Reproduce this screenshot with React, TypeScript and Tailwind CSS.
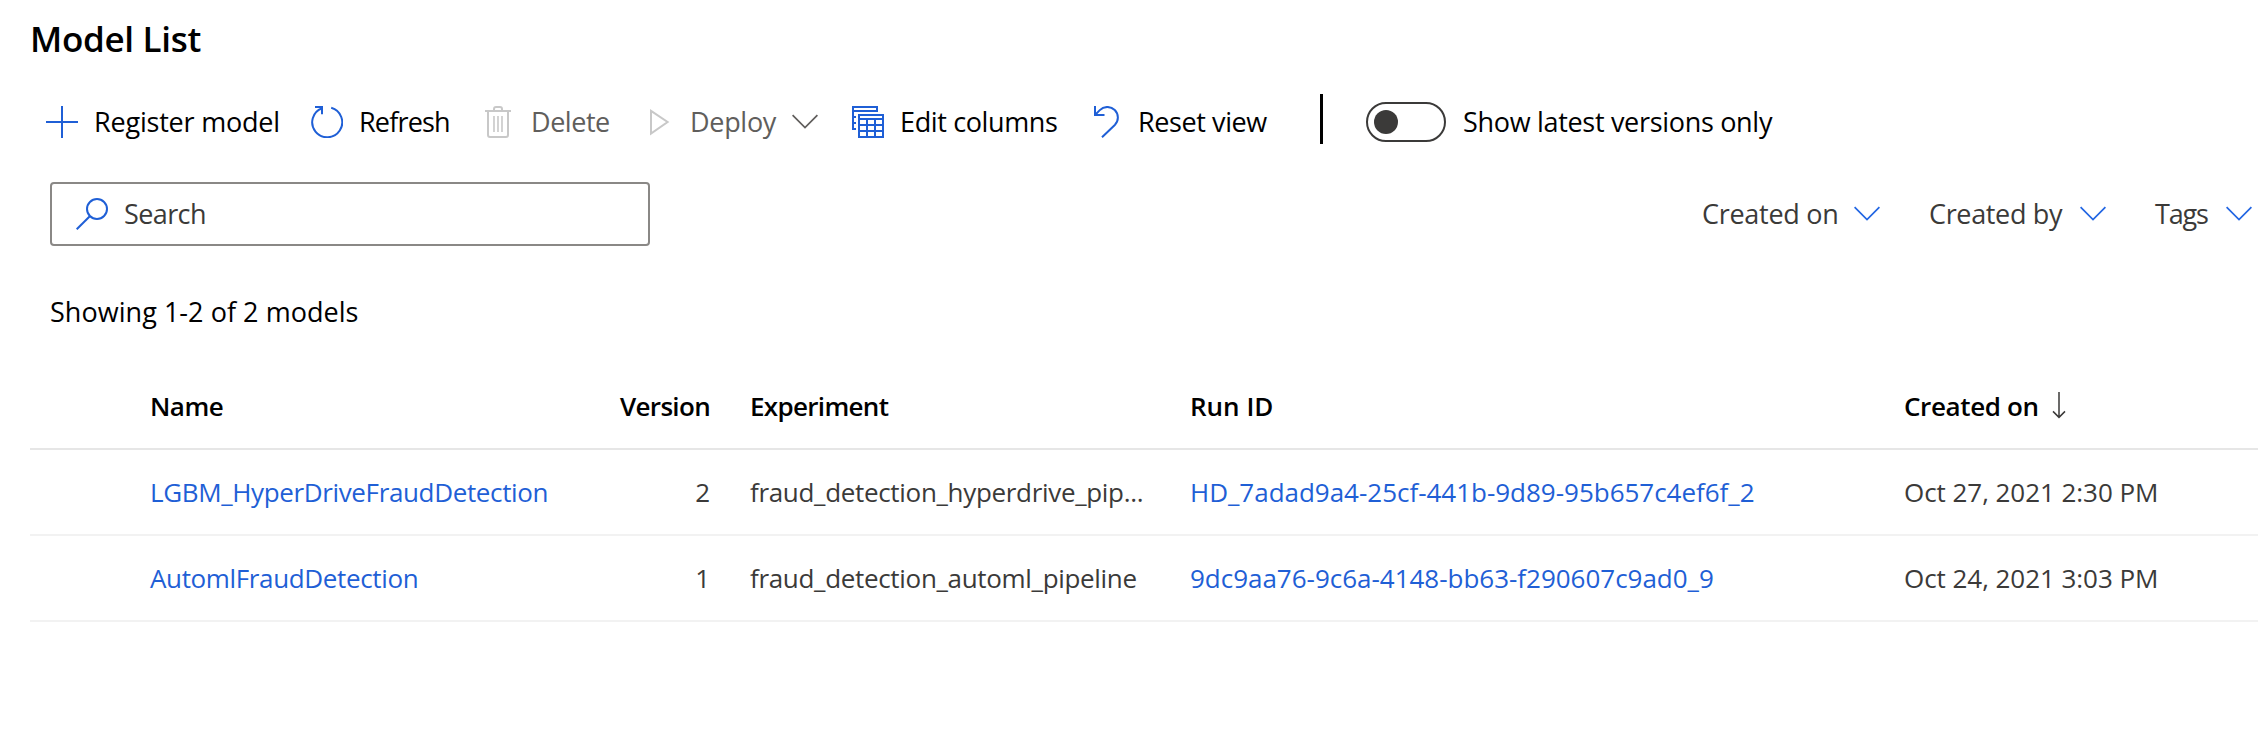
import type { ReactNode } from "react";

const BLUE = "#1f5fd6";

function PlusIcon() {
  return (
    <svg width="32" height="32" viewBox="0 0 32 32" fill="none" stroke={BLUE} strokeWidth="2">
      <path d="M16 0v32M0 16h32" />
    </svg>
  );
}

function RefreshIcon() {
  return (
    <svg width="32" height="32" viewBox="0 0 32 32" fill="none" stroke={BLUE} strokeWidth="2">
      <path d="M20.2 1.8A15 15 0 1 1 11 2.2" />
      <path d="M4 1h7v7.2" />
    </svg>
  );
}

function TrashIcon() {
  return (
    <svg width="32" height="32" viewBox="0 0 32 32" fill="none" stroke="#c8c8c8" strokeWidth="2">
      <path d="M3 5h26" />
      <path d="M12 5V3a2 2 0 0 1 2-2h4a2 2 0 0 1 2 2v2" />
      <path d="M6 5v24a2 2 0 0 0 2 2h16a2 2 0 0 0 2-2V5" />
      <path d="M12 10v16M16 10v16M20 10v16" strokeWidth="1.6" />
    </svg>
  );
}

function PlayIcon() {
  return (
    <svg width="32" height="32" viewBox="0 0 32 32" fill="none" stroke="#c8c8c8" strokeWidth="2">
      <path d="M9 4.8 25.6 16 9 27.6z" />
    </svg>
  );
}

function ColumnsIcon() {
  return (
    <svg width="32" height="32" viewBox="0 0 32 32" fill="none" stroke={BLUE} strokeWidth="2">
      <path d="M4 23H1V1h24v4H1M1 11h3M1 17h3" />
      <path d="M7 9h24v22H7zM7 13h24M7 19h24M7 25h24M15 13v18M23 13v18" />
    </svg>
  );
}

function UndoIcon() {
  return (
    <svg width="32" height="32" viewBox="0 0 32 32" fill="none" stroke={BLUE} strokeWidth="2">
      <path d="M5 0v9h9.5" />
      <path d="M5 9 9.8 4.1A10.5 10.5 0 0 1 24.8 19L12 31.3" />
    </svg>
  );
}

function Chevron({ color }: { color: string }) {
  return (
    <svg width="26" height="16" viewBox="0 0 26 16" fill="none" stroke={color} strokeWidth="1.7">
      <path d="m.6 1.2 12.4 12.4L25.4 1.2" />
    </svg>
  );
}

function SearchIcon() {
  return (
    <svg width="32" height="32" viewBox="0 0 32 32" fill="none" stroke={BLUE} strokeWidth="2">
      <circle cx="21" cy="11" r="10" />
      <path d="M13.8 18.2.7 31.3" />
    </svg>
  );
}

function SortArrow() {
  return (
    <svg className="ml-[13px]" width="14" height="28" viewBox="0 0 14 28" fill="none" stroke="#3b3a39" strokeWidth="1.5">
      <path d="M7 0v25.5M1 19.4l6 6 6-6" />
    </svg>
  );
}

function Command({ icon, className, children }: { icon: ReactNode; className: string; children: ReactNode }) {
  return (
    <button className={"flex shrink-0 items-center whitespace-nowrap " + className}>
      {icon}
      {children}
    </button>
  );
}

function Filter({ label, className }: { label: string; className: string }) {
  return (
    <button className={"flex shrink-0 items-center justify-between whitespace-nowrap " + className}>
      {label}
      <Chevron color="#2266e3" />
    </button>
  );
}

const GRID = "grid grid-cols-[120px_470px_90px_40px_440px_714px_354px] items-center";

const rows = [
  {
    name: "LGBM_HyperDriveFraudDetection",
    version: 2,
    experiment: "fraud_detection_hyperdrive_pip...",
    run: "HD_7adad9a4-25cf-441b-9d89-95b657c4ef6f_2",
    created: "Oct 27, 2021 2:30 PM",
  },
  {
    name: "AutomlFraudDetection",
    version: 1,
    experiment: "fraud_detection_automl_pipeline",
    run: "9dc9aa76-9c6a-4148-bb63-f290607c9ad0_9",
    created: "Oct 24, 2021 3:03 PM",
  },
];

export default function App() {
  return (
    <div className="h-[750px] w-[2258px] overflow-hidden bg-white font-['Open_Sans','Noto_Sans',sans-serif] text-[27px] leading-9 text-black">
      <h1 className="pt-[15px] pl-[30px] text-[35px] leading-[48px] font-semibold tracking-[-0.3px]">Model List</h1>

      <div className="mt-[19px] flex h-20 items-center pl-[46px]">
        <Command icon={<PlusIcon />} className="w-[265px] gap-4 tracking-[-0.2px]">Register model</Command>
        <Command icon={<RefreshIcon />} className="w-[171px] gap-4 tracking-[-0.81px]">Refresh</Command>
        <Command icon={<TrashIcon />} className="w-[160px] gap-[17px] tracking-[-0.46px] text-[#605e5c]">Delete</Command>
        <Command icon={<PlayIcon />} className="w-[210px] gap-4 tracking-[-0.3px] text-[#605e5c]">
          Deploy
          <Chevron color="#605e5c" />
        </Command>
        <Command icon={<ColumnsIcon />} className="w-[238px] gap-4 tracking-[-0.37px]">Edit columns</Command>
        <Command icon={<UndoIcon />} className="w-[230px] gap-4 tracking-[-0.4px]">Reset view</Command>
        <div className="mt-[-6px] h-[50px] w-[2.5px] bg-black" />
        <button className="ml-[43.5px] flex h-10 w-20 shrink-0 items-center rounded-full border-2 border-[#3b3a39] pl-[6px]">
          <span className="h-6 w-6 rounded-full bg-[#3b3a39]" />
        </button>
        <span className="ml-[17px] whitespace-nowrap tracking-[-0.31px]">Show latest versions only</span>
      </div>

      <div className="mt-[20px] flex h-16 items-center pl-[50px] text-[#3b3a39]">
        <div className="flex h-16 w-[600px] items-center gap-4 rounded-[4px] border-2 border-[#8a8886] pl-6 tracking-[-0.6px]">
          <SearchIcon />
          Search
        </div>
        <div className="ml-[1052px] flex items-center">
          <Filter label="Created on" className="w-[178px] tracking-[-0.28px]" />
          <Filter label="Created by" className="ml-[49px] w-[177px] tracking-[-0.35px]" />
          <Filter label="Tags" className="ml-[49px] w-[97px] tracking-[-1.2px]" />
        </div>
      </div>

      <p className="mt-[48px] pl-[50px] tracking-[0.04px]">Showing 1-2 of 2 models</p>

      <div className="mt-[34px] ml-[30px] text-[26px] text-[#3b3a39]">
        <div className={GRID + " h-[86px] border-b-2 border-[#e6e6e6] font-semibold text-black"}>
          <span className="col-start-2 tracking-[-0.5px]">Name</span>
          <span className="flex justify-end tracking-[-0.67px]">Version</span>
          <span className="col-start-5 tracking-[-0.68px]">Experiment</span>
          <span>Run ID</span>
          <span className="flex items-center whitespace-nowrap tracking-[-0.36px]">
            Created on
            <SortArrow />
          </span>
        </div>
        {rows.map((row) => (
          <div key={row.name} className={GRID + " h-[86px] border-b-2 border-[#f2f2f2] whitespace-nowrap"}>
            <a className="col-start-2 tracking-[-0.36px] text-[#1f5fd6]">{row.name}</a>
            <span className="text-right">{row.version}</span>
            <span className="col-start-5 tracking-[-0.32px]">{row.experiment}</span>
            <a className="tracking-[-0.02px] text-[#1f5fd6]">{row.run}</a>
            <span className="tracking-[-0.05px]">{row.created}</span>
          </div>
        ))}
      </div>
    </div>
  );
}
